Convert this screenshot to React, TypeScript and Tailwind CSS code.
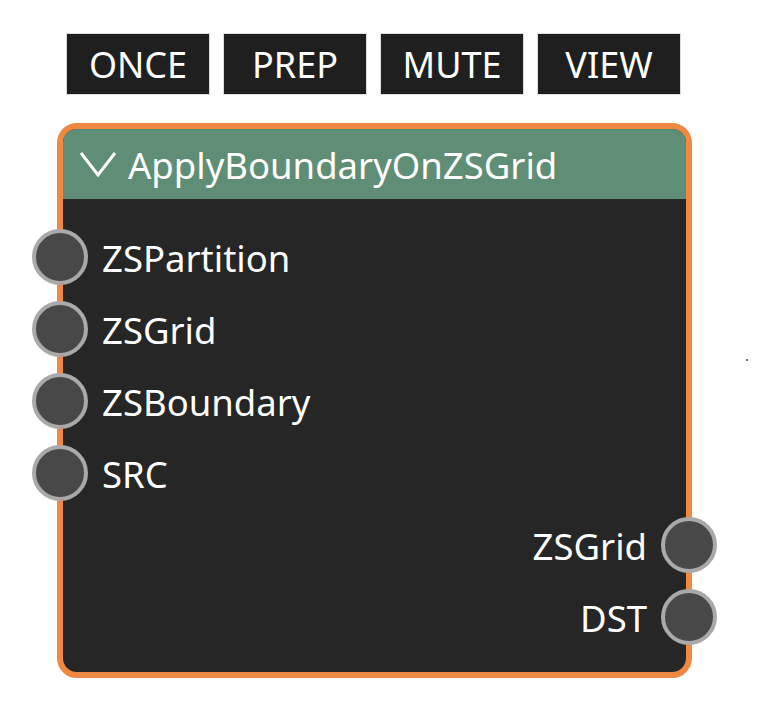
const inputs = ['ZSPartition', 'ZSGrid', 'ZSBoundary', 'SRC'];
const outputs = ['ZSGrid', 'DST'];
const buttons = ['ONCE', 'PREP', 'MUTE', 'VIEW'];

function Socket({ side }: { side: 'left' | 'right' }) {
  return (
    <div
      className={
        'w-[56px] h-[56px] shrink-0 rounded-full border-[4px] border-[#a9a9a9] bg-[#484848] ' +
        (side === 'left' ? 'ml-[-31px]' : 'mr-[-31px]')
      }
    />
  );
}

export default function App() {
  return (
    <div className="relative min-h-[726px] bg-white pl-[57px] pt-[33px] text-white [font-family:'Noto_Sans',sans-serif]">
      <div className="ml-[9px] flex gap-[13px]">
        {buttons.map((b) => (
          <div
            key={b}
            className="flex h-[62px] w-[144px] items-center justify-center border border-[#dcdcdc] bg-[#1f1f1f] pt-[2px] text-[36px] leading-none"
          >
            {b}
          </div>
        ))}
      </div>

      <div className="mt-[28px] w-[635px] rounded-[20px] border-[6px] border-[#ee8843] bg-[#262626] pb-[19px]">
        <div className="flex h-[70px] items-center gap-[11px] rounded-t-[14px] bg-[#608d76] pl-[16px]">
          <svg width="38" height="26" viewBox="0 0 38 26" fill="none" stroke="white" strokeWidth="3">
            <polyline points="2,2 19,24 36,2" />
          </svg>
          <span className="pt-[2px] text-[36.5px] leading-none">ApplyBoundaryOnZSGrid</span>
        </div>

        <div className="pt-[22px]">
          {inputs.map((n) => (
            <div key={n} className="flex h-[72px] items-center gap-[14px]">
              <Socket side="left" />
              <span className="pt-[3px] text-[36.5px] leading-none">{n}</span>
            </div>
          ))}
          {outputs.map((n) => (
            <div key={n} className="flex h-[72px] items-center justify-end gap-[14px]">
              <span className="pt-[3px] text-[36.5px] leading-none">{n}</span>
              <Socket side="right" />
            </div>
          ))}
        </div>
      </div>

      <div className="absolute left-[746px] top-[359px] h-[2px] w-[2px] bg-[#777]" />
    </div>
  );
}
